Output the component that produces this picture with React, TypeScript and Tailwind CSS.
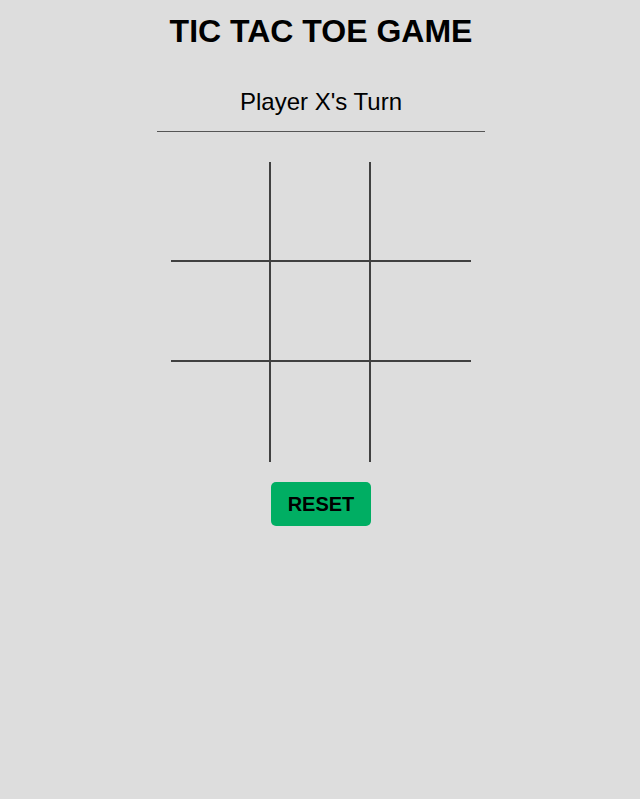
import React, { useState } from 'react'

const App: React.FC = () => {
  const [cells, setCells] = useState<string[]>(Array(9).fill(''))
  const [turn, setTurn] = useState<'X' | 'O'>('X')

  const play = (i: number) => {
    if (cells[i]) return
    const next = [...cells]
    next[i] = turn
    setCells(next)
    setTurn(turn === 'X' ? 'O' : 'X')
  }

  const reset = () => {
    setCells(Array(9).fill(''))
    setTurn('X')
  }

  const borderFor = (i: number) => {
    const right = i % 3 < 2 ? 'border-r-2' : ''
    const bottom = i < 6 ? 'border-b-2' : ''
    return `${right} ${bottom}`
  }

  return (
    <div className="min-h-screen w-full bg-[#dddddd] pl-[2px] flex flex-col items-center font-['Liberation_Sans',Arial,sans-serif] text-black">
      <h1 className="mt-[13px] text-[32px] leading-[37px] font-bold">TIC TAC TOE GAME</h1>

      <p className="mt-[38px] text-[24px] leading-[28px]">Player {turn}'s Turn</p>

      <div className="mt-[15px] w-[328px] h-px bg-[#555555]" />

      {/* Board */}
      <div className="mt-[30px] grid grid-cols-3 w-[300px]">
        {cells.map((c, i) => (
          <button
            key={i}
            onClick={() => play(i)}
            className={`w-[100px] h-[100px] border-[#404040] text-[48px] font-bold flex items-center justify-center ${borderFor(i)}`}
          >
            {c}
          </button>
        ))}
      </div>

      <button
        onClick={reset}
        className="mt-[20px] w-[100px] h-[44px] rounded-[5px] bg-[#00ae63] text-[20px] font-bold text-black"
      >
        RESET
      </button>
    </div>
  )
}

export default App
